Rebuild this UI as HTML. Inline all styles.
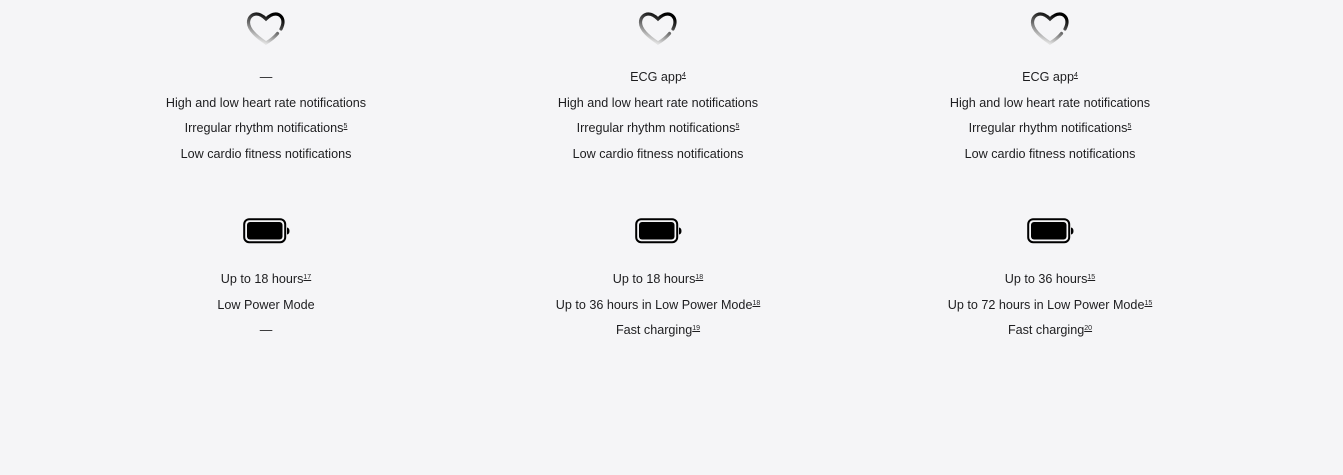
<!DOCTYPE html>
<html><head><meta charset="utf-8"><style>
body{margin:0;width:1343px;height:475px;background:#f5f5f7;font-family:"Liberation Sans",sans-serif;color:#1d1d1f;overflow:hidden;position:relative}
.col{position:absolute;top:0;width:392px;text-align:center}
.heart{position:absolute;top:10px;left:175px}
.batt{position:absolute;top:218px;left:173px}
.t{position:absolute;left:0;width:392px;font-size:12.6px;line-height:25.6px}
.t1{top:65px}.t2{top:267px}
sup{font-size:7px;vertical-align:4px;text-decoration:underline;line-height:0}
</style></head><body>
<svg width="0" height="0" style="position:absolute"><defs>
<linearGradient id="g" x1="0.85" y1="0.1" x2="0.45" y2="1"><stop offset="0" stop-color="#000"/><stop offset="0.5" stop-color="#666"/><stop offset="1" stop-color="#e2e2e2"/></linearGradient>
</defs></svg>
<div class="col" style="left:70px">
<svg class="heart" width="42" height="38" viewBox="0 0 42 38"><path d="M36 19 C37.5 16 38 14 38 12 C38 7 34.5 4 30.5 4 C26.5 4 23.5 6.5 21 9 C18.5 6.5 15.5 4 11.5 4 C7 4 3.5 7.5 3.5 12.5 C3.5 20 12 27 21 33 C26 30 30 26.5 32.5 23.5" fill="none" stroke="url(#g)" stroke-width="3.2" stroke-linecap="round"/></svg>
<svg class="batt" width="48" height="26" viewBox="0 0 48 26"><rect x="1.2" y="1.2" width="41" height="23" rx="5" fill="none" stroke="#000" stroke-width="2"/><rect x="4" y="4" width="35.5" height="17.5" rx="3" fill="#000"/><path d="M44 9.5 Q46.5 10 46.5 13 Q46.5 16 44 16.5Z" fill="#000"/></svg>
<div class="t t1">—<br>High and low heart rate notifications<br>Irregular rhythm notifications<sup>5</sup><br>Low cardio fitness notifications</div>
<div class="t t2">Up to 18 hours<sup>17</sup><br>Low Power Mode<br>—</div>
</div>
<div class="col" style="left:462px">
<svg class="heart" width="42" height="38" viewBox="0 0 42 38"><path d="M36 19 C37.5 16 38 14 38 12 C38 7 34.5 4 30.5 4 C26.5 4 23.5 6.5 21 9 C18.5 6.5 15.5 4 11.5 4 C7 4 3.5 7.5 3.5 12.5 C3.5 20 12 27 21 33 C26 30 30 26.5 32.5 23.5" fill="none" stroke="url(#g)" stroke-width="3.2" stroke-linecap="round"/></svg>
<svg class="batt" width="48" height="26" viewBox="0 0 48 26"><rect x="1.2" y="1.2" width="41" height="23" rx="5" fill="none" stroke="#000" stroke-width="2"/><rect x="4" y="4" width="35.5" height="17.5" rx="3" fill="#000"/><path d="M44 9.5 Q46.5 10 46.5 13 Q46.5 16 44 16.5Z" fill="#000"/></svg>
<div class="t t1">ECG app<sup>4</sup><br>High and low heart rate notifications<br>Irregular rhythm notifications<sup>5</sup><br>Low cardio fitness notifications</div>
<div class="t t2">Up to 18 hours<sup>18</sup><br>Up to 36 hours in Low Power Mode<sup>18</sup><br>Fast charging<sup>19</sup></div>
</div>
<div class="col" style="left:854px">
<svg class="heart" width="42" height="38" viewBox="0 0 42 38"><path d="M36 19 C37.5 16 38 14 38 12 C38 7 34.5 4 30.5 4 C26.5 4 23.5 6.5 21 9 C18.5 6.5 15.5 4 11.5 4 C7 4 3.5 7.5 3.5 12.5 C3.5 20 12 27 21 33 C26 30 30 26.5 32.5 23.5" fill="none" stroke="url(#g)" stroke-width="3.2" stroke-linecap="round"/></svg>
<svg class="batt" width="48" height="26" viewBox="0 0 48 26"><rect x="1.2" y="1.2" width="41" height="23" rx="5" fill="none" stroke="#000" stroke-width="2"/><rect x="4" y="4" width="35.5" height="17.5" rx="3" fill="#000"/><path d="M44 9.5 Q46.5 10 46.5 13 Q46.5 16 44 16.5Z" fill="#000"/></svg>
<div class="t t1">ECG app<sup>4</sup><br>High and low heart rate notifications<br>Irregular rhythm notifications<sup>5</sup><br>Low cardio fitness notifications</div>
<div class="t t2">Up to 36 hours<sup>15</sup><br>Up to 72 hours in Low Power Mode<sup>15</sup><br>Fast charging<sup>20</sup></div>
</div>
</body></html>
